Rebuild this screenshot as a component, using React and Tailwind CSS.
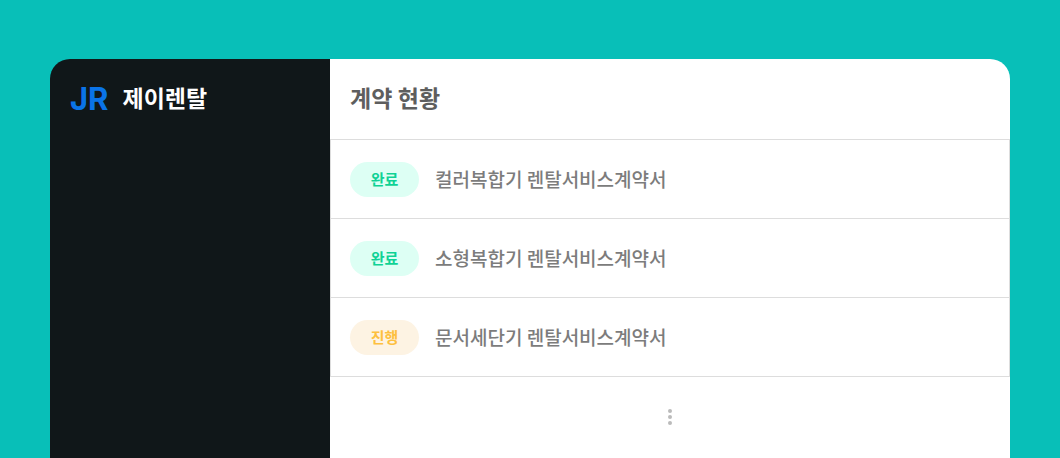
import React from "react";

const contracts = [
  { id: 1, status: "완료", title: "컬러복합기 렌탈서비스계약서", badge: "bg-[#ddfff4] text-[#0fd295]" },
  { id: 2, status: "완료", title: "소형복합기 렌탈서비스계약서", badge: "bg-[#ddfff4] text-[#0fd295]" },
  { id: 3, status: "진행", title: "문서세단기 렌탈서비스계약서", badge: "bg-[#fdf3e3] text-[#fdc040]" },
];

const App = () => {
  return (
    <div className="min-h-screen bg-[#08bfb8] px-[50px] pt-[59px] flex font-['Noto_Sans_CJK_KR',sans-serif]">
      <div className="flex flex-1 rounded-t-[20px] overflow-hidden">
        {/* Sidebar */}
        <aside className="w-[280px] shrink-0 bg-[#101719] px-5">
          <div className="flex items-center gap-3.5 h-20 font-['Inter','Noto_Sans_CJK_KR',sans-serif]">
            <span className="text-[31px] font-bold text-[#0a74e8]">JR</span>
            <span className="text-[23px] font-bold text-white">제이렌탈</span>
          </div>
        </aside>

        {/* Contract list */}
        <main className="flex-1 bg-white">
          <h1 className="flex items-center h-20 px-5 text-[23px] font-bold text-[#5e5e5e] font-['Inter','Noto_Sans_CJK_KR',sans-serif]">
            계약 현황
          </h1>
          <ul className="border-t border-x border-[#ddd]">
            {contracts.map((item) => (
              <li key={item.id} className="flex items-center gap-4 h-[79px] px-[19px] border-b border-[#ddd]">
                <span className={`flex items-center justify-center w-[69px] h-[35px] rounded-full text-[15px] font-bold ${item.badge}`}>
                  {item.status}
                </span>
                <span className="text-[19px] font-medium text-[#7c7c7c]">{item.title}</span>
              </li>
            ))}
          </ul>
          <div className="flex flex-col items-center gap-[2px] pt-8">
            <span className="size-1 rounded-full bg-[#bbb]" />
            <span className="size-1 rounded-full bg-[#bbb]" />
            <span className="size-1 rounded-full bg-[#bbb]" />
          </div>
        </main>
      </div>
    </div>
  );
};

export default App;
